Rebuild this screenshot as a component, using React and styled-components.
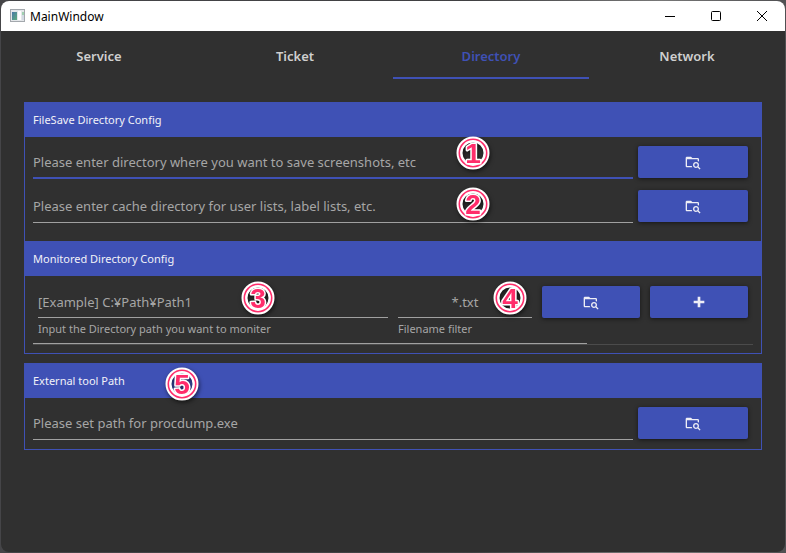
import React from "react";
import styled, { createGlobalStyle } from "styled-components";

const indigo = "#3f51b5";
const surface = "#303030";
const muted = "#a0a0a0";

const GlobalStyle = createGlobalStyle`
  * { box-sizing: border-box; }
  body {
    margin: 0;
    background: linear-gradient(90deg, #454548 0%, #404042 60%, #777777 84%, #505052 100%);
    font-family: "Noto Sans", "Open Sans", sans-serif;
  }
  button, input { font: inherit; }
`;

const Desktop = styled.div`
  min-height: 100vh;
  padding: 1px;
  display: flex;
`;

const Window = styled.div`
  flex: 1;
  display: flex;
  flex-direction: column;
  background: ${surface};
  border-radius: 8px;
  overflow: hidden;
`;

const TitleBar = styled.header`
  height: 30px;
  display: flex;
  align-items: center;
  padding-left: 8px;
  background: #ffffff;
  color: #000000;
`;

const Title = styled.h1`
  flex: 1;
  margin: 0;
  padding-left: 5px;
  font-size: 12px;
  font-weight: 400;
`;

const Caption = styled.button`
  width: 46px;
  height: 30px;
  padding: 0;
  border: 0;
  background: transparent;
  display: flex;
  align-items: center;
  justify-content: center;
`;

const Tabs = styled.nav`
  display: grid;
  grid-template-columns: repeat(4, 1fr);
`;

const Tab = styled.button`
  height: 48px;
  padding: 4px 0 0;
  border: 0;
  border-bottom: 2px solid ${(p) => (p.$active ? indigo : "transparent")};
  background: transparent;
  color: ${(p) => (p.$active ? indigo : "#cfcfcf")};
  font-size: 13px;
  font-weight: 600;
`;

const Content = styled.main`
  display: flex;
  flex-direction: column;
  gap: 9px;
  padding: 23px;
`;

const Card = styled.div`
  border: 1px solid ${indigo};
  border-top: 0;
`;

const Section = styled.section`
  display: flex;
  flex-direction: column;
`;

const Heading = styled.h2`
  position: relative;
  height: 35px;
  margin: 0;
  padding: 0 8px;
  display: flex;
  align-items: center;
  background: ${indigo};
  color: #f2f2f8;
  font-size: 11px;
  font-weight: 400;
`;

const Rows = styled.div`
  display: flex;
  flex-direction: column;
  gap: 11px;
  padding: 9px 13px ${(p) => p.$bottom}px 8px;
`;

const Row = styled.div`
  position: relative;
  display: grid;
  grid-template-columns: 1fr 110px;
  gap: 5px;
`;

const MonitorRow = styled.div`
  position: relative;
  display: grid;
  grid-template-columns: 1fr 134px 98px 98px;
  gap: 10px;
  margin: 10px 13px 0;
`;

const Field = styled.div`
  display: flex;
  flex-direction: column;
  min-width: 0;
`;

const TextBox = styled.input`
  width: 100%;
  height: ${(p) => (p.$compact ? 32 : 33)}px;
  padding: 0;
  border: 0;
  border-bottom: ${(p) => (p.$active ? `2px solid ${indigo}` : `1px solid ${muted}`)};
  border-radius: 0;
  outline: 0;
  background: transparent;
  color: #dddddd;
  font-size: 13px;
  text-align: ${(p) => (p.$centered ? "center" : "left")};
  &::placeholder { color: #a6a6a6; opacity: 1; }
`;

const Helper = styled.label`
  height: 23px;
  line-height: 22px;
  color: #a6a6a6;
  font-size: 11px;
`;

const Action = styled.button`
  height: 32px;
  padding: 0;
  border: 0;
  border-radius: 2px;
  display: flex;
  align-items: center;
  justify-content: center;
  background: ${indigo};
  color: #eeeef6;
  box-shadow: 0 1px 4px rgba(0, 0, 0, 0.55);
`;

const ListRule = styled.div`
  margin: 2px 8px 8px;
  border-bottom: 1px solid #4b4b4b;
  &::before {
    content: "";
    display: block;
    width: 77%;
    height: 1px;
    background: ${muted};
  }
`;

const Marker = styled.svg`
  position: absolute;
  left: ${(p) => p.$left}px;
  top: ${(p) => p.$top}px;
  width: 34px;
  height: 34px;
  overflow: visible;
  pointer-events: none;
  z-index: 1;
  filter: drop-shadow(1px 2px 2px rgba(0, 0, 0, 0.55));
`;

const MarkerDigit = styled.text`
  font-family: "Liberation Sans", sans-serif;
  font-size: 28px;
  font-weight: 700;
  text-anchor: middle;
  fill: #ff2d6b;
  stroke: #ffffff;
  stroke-width: 3px;
  stroke-linejoin: round;
  paint-order: stroke;
`;

function Badge({ digit, left, top }) {
  return (
    <Marker $left={left} $top={top} viewBox="0 0 34 34">
      <circle cx="17" cy="17" r="13.5" fill="none" stroke="#fff" strokeWidth="6" />
      <circle cx="17" cy="17" r="13.7" fill="none" stroke="#ff2d6b" strokeWidth="1.6" />
      <MarkerDigit x="17" y="27">{digit}</MarkerDigit>
    </Marker>
  );
}

function FolderSearch() {
  return (
    <svg width="16" height="16" viewBox="0 0 24 24" fill="currentColor" aria-hidden="true">
      <path d="M16.5,12C19,12 21,14 21,16.5C21,17.38 20.75,18.21 20.31,18.9L23.39,22L22,23.39L18.88,20.32C18.19,20.75 17.37,21 16.5,21C14,21 12,19 12,16.5C12,14 14,12 16.5,12M16.5,14A2.5,2.5 0 0,0 14,16.5A2.5,2.5 0 0,0 16.5,19A2.5,2.5 0 0,0 19,16.5A2.5,2.5 0 0,0 16.5,14M9,4L11,6H19A2,2 0 0,1 21,8V11.81C20.42,11.26 19.75,10.81 19,10.5V8H3V18H10.17C10.34,18.72 10.63,19.39 11,20H3C1.89,20 1,19.1 1,18V6C1,4.89 1.89,4 3,4H9Z" />
    </svg>
  );
}

function Plus() {
  return (
    <svg width="16" height="16" viewBox="0 0 24 24" fill="currentColor" aria-hidden="true">
      <path d="M20 14H14V20H10V14H4V10H10V4H14V10H20V14Z" />
    </svg>
  );
}

function AppIcon() {
  return (
    <svg width="16" height="14" viewBox="0 0 16 14" aria-hidden="true">
      <defs>
        <linearGradient id="pane" x1="0" y1="0" x2="1" y2="1">
          <stop offset="0" stopColor="#4a78a8" />
          <stop offset="1" stopColor="#5fae7c" />
        </linearGradient>
      </defs>
      <rect x="1.5" y="0.5" width="14" height="12" fill="#e4e7ea" stroke="#a3a8ad" />
      <rect x="3" y="3" width="5" height="8" fill="url(#pane)" />
      <rect x="9" y="2" width="3" height="9" fill="#ffffff" />
      <rect x="13" y="3" width="2" height="3" fill="#9fd0b0" />
      <rect x="13" y="6" width="2" height="5" fill="#d3dae4" />
    </svg>
  );
}

function PathRow({ placeholder, active, children }) {
  return (
    <Row>
      <TextBox type="text" aria-label={placeholder} placeholder={placeholder} $active={active} />
      <Action type="button" aria-label="Browse"><FolderSearch /></Action>
      {children}
    </Row>
  );
}

const tabs = ["Service", "Ticket", "Directory", "Network"];

export default function App() {
  return (
    <Desktop>
      <GlobalStyle />
      <Window>
        <TitleBar>
          <AppIcon />
          <Title>MainWindow</Title>
          <Caption type="button" aria-label="Minimize">
            <svg width="10" height="10" viewBox="0 0 10 10"><path d="M0 5.5H10" stroke="#000" /></svg>
          </Caption>
          <Caption type="button" aria-label="Maximize">
            <svg width="10" height="10" viewBox="0 0 10 10"><rect x="0.5" y="0.5" width="9" height="9" rx="1" fill="none" stroke="#000" /></svg>
          </Caption>
          <Caption type="button" aria-label="Close">
            <svg width="10" height="10" viewBox="0 0 10 10"><path d="M0 0L10 10M10 0L0 10" stroke="#000" /></svg>
          </Caption>
        </TitleBar>
        <Tabs>
          {tabs.map((name) => (
            <Tab key={name} type="button" $active={name === "Directory"}>{name}</Tab>
          ))}
        </Tabs>
        <Content>
          <Card>
            <Section>
              <Heading>FileSave Directory Config</Heading>
              <Rows $bottom={18}>
                <PathRow active placeholder="Please enter directory where you want to save screenshots, etc">
                  <Badge digit="1" left={423} top={-10} />
                </PathRow>
                <PathRow placeholder="Please enter cache directory for user lists, label lists, etc.">
                  <Badge digit="2" left={423} top={-3} />
                </PathRow>
              </Rows>
            </Section>
            <Section>
              <Heading>Monitored Directory Config</Heading>
              <MonitorRow>
                <Field>
                  <TextBox id="path" type="text" placeholder="[Example] C:¥Path¥Path1" $compact />
                  <Helper htmlFor="path">Input the Directory path you want to moniter</Helper>
                </Field>
                <Field>
                  <TextBox id="filter" type="text" placeholder="*.txt" $compact $centered />
                  <Helper htmlFor="filter">Filename filter</Helper>
                </Field>
                <Action type="button" aria-label="Browse"><FolderSearch /></Action>
                <Action type="button" aria-label="Add"><Plus /></Action>
                <Badge digit="3" left={203} top={-5} />
                <Badge digit="4" left={455} top={-5} />
              </MonitorRow>
              <ListRule />
            </Section>
          </Card>
          <Card>
            <Heading>
              External tool Path
              <Badge digit="5" left={140} top={4} />
            </Heading>
            <Rows $bottom={9}>
              <PathRow placeholder="Please set path for procdump.exe" />
            </Rows>
          </Card>
        </Content>
      </Window>
    </Desktop>
  );
}
